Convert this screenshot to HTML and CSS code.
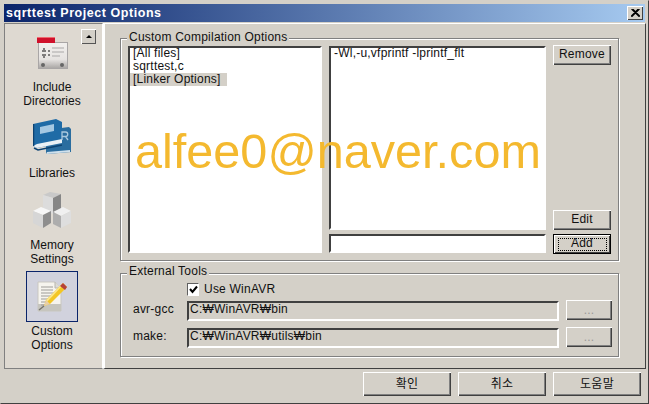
FILE: index.html
```html
<!DOCTYPE html>
<html lang="en">
<head>
  <meta charset="UTF-8" />
  <title>sqrttest Project Options</title>
  <link rel="stylesheet" href="styles.css">
</head>
<body>
  <div class="dialog">
    <!-- Title bar -->
    <div class="titlebar">
      <span class="title">sqrttest Project Options</span>
      <span class="close-btn">
        <svg width="9" height="8" viewBox="0 0 9 8"><path d="M0.5 0L8.5 8M1.8 0L9 7.2M8.5 0L0.5 8M7.2 0L0 7.2" stroke="#000" stroke-width="1.1" fill="none"/></svg>
      </span>
    </div>

    <div class="body">
      <!-- Left icon list -->
      <div class="sidebar">
        <span class="scroll-btn"><span class="arrow"></span></span>

        <div class="nav-item nav-include">
          <div class="nav-icon">
            <svg width="31" height="32" viewBox="0 0 31 32">
              <defs>
                <linearGradient id="cardFill" x1="0" y1="0" x2="0" y2="1">
                  <stop offset="0" stop-color="#f2f0ee"/>
                  <stop offset="0.65" stop-color="#e6e3e1"/>
                  <stop offset="1" stop-color="#a8a5a3"/>
                </linearGradient>
              </defs>
              <rect x="1.5" y="5.5" width="29" height="26" fill="url(#cardFill)" stroke="#a9a6a6"/>
              <rect x="0" y="0" width="18" height="6" fill="#d0112b"/>
              <rect x="0" y="0" width="18" height="1" fill="#ee6a70"/>
              <path d="M5 14h4M5 18h4M7 11v2M7 19v2M11 14h2M11 18h2" stroke="#7e7c7c" stroke-width="2" fill="none"/>
              <path d="M15 11h12M15 15h12M15 19h8" stroke="#aaa8a8" stroke-width="1.2"/>
              <circle cx="6" cy="28" r="2" fill="#666"/>
              <circle cx="25" cy="28" r="2" fill="#666"/>
            </svg>
          </div>
          <div class="nav-label">Include<br>Directories</div>
        </div>

        <div class="nav-item nav-libraries">
          <div class="nav-icon">
            <svg width="38" height="36" viewBox="0 0 38 36">
              <path d="M13 11L36 8L38 10V33L14 35L13 33Z" fill="#2a6d9f"/>
              <path d="M14 33L37 31V33L14 35Z" fill="#cfe0ec"/>
              <path d="M0 5L23 0L29 3V24L4 29L0 27Z" fill="#1f6ba6"/>
              <path d="M7 8L21 5V12L7 15Z" fill="#a5c8e2"/>
              <path d="M0 27L4 25L29 20V24L4 29Z" fill="#eaf1f6"/>
              <path d="M0.5 5V27" stroke="#0c4272" stroke-width="1.5"/>
              <path d="M1 29L5 31L29 26" stroke="#0c4272" stroke-width="1.5" fill="none"/>
              <path d="M29 21V13h3.5a2 2 0 0 1 0 4.5h-3.5M32.5 17.5l2.5 3.5" stroke="#a9c9df" stroke-width="1.3" fill="none"/>
            </svg>
          </div>
          <div class="nav-label">Libraries</div>
        </div>

        <div class="nav-item nav-memory">
          <div class="nav-icon">
            <svg width="38" height="36" viewBox="0 0 38 36">
              <path d="M10 3L17 0L28 2L20 6Z" fill="#c9c9c9"/>
              <path d="M10 3L20 6V22L10 18Z" fill="#dcdcdc"/>
              <path d="M20 6L28 2V17L20 22Z" fill="#868686"/>
              <path d="M0 19L8 15L18 19L10 23Z" fill="#f7f7f7"/>
              <path d="M0 19L10 23V36L0 31Z" fill="#d6d6d6"/>
              <path d="M10 23L18 19V31L10 36Z" fill="#8e8e8e"/>
              <path d="M20 20L30 15L38 19L28 24Z" fill="#f0f0f0"/>
              <path d="M20 20L28 24V36L20 32Z" fill="#adadad"/>
              <path d="M28 24L38 19V31L28 36Z" fill="#dedede"/>
            </svg>
          </div>
          <div class="nav-label">Memory<br>Settings</div>
        </div>

        <div class="nav-item nav-custom">
          <div class="nav-tile">
            <svg width="32" height="32" viewBox="0 0 32 32">
              <path d="M2 1H19L25 7V30H2Z" fill="#f6f4ee" stroke="#c9c7c0"/>
              <path d="M19 1V7H25" fill="#dddbd5" stroke="#b8b6b0"/>
              <rect x="2" y="23" width="23" height="7" fill="#c6c5be"/>
              <path d="M5 6H17M5 9H17M5 12H21M5 15H18M5 18H14M5 21H11M5 24H9" stroke="#9d9b98" stroke-width="1.2"/>
              <path d="M27 2L31 6L14 23L8 25L10 19Z" fill="#f3c624"/>
              <path d="M10 19L27 2L28 3L11 21Z" fill="#fbe58a"/>
              <path d="M27 2L31 6L29 9L24 5Z" fill="#b5413a"/>
              <path d="M8 25L10 19L14 23Z" fill="#e8cfa8"/>
              <path d="M8 25L3 29" stroke="#77746c" stroke-width="1.5"/>
            </svg>
          </div>
          <div class="nav-label">Custom<br>Options</div>
        </div>
      </div>

      <!-- Option groups -->
      <div class="panel">
        <div class="group group-compile">
          <span class="legend">Custom Compilation Options</span>
          <div class="compile-grid">
            <div class="sunken listbox file-list">
              <div class="row">[All files]</div>
              <div class="row">sqrttest,c</div>
              <div class="row selected">[Linker Options]</div>
            </div>
            <div class="sunken listbox options-list">
              <div class="row">-Wl,-u,vfprintf -lprintf_flt</div>
            </div>
            <div class="side-btns">
              <span class="btn">Remove</span>
              <span class="btn">Edit</span>
            </div>
            <div class="sunken option-input"></div>
            <span class="btn btn-default"><span class="focus">Add</span></span>
          </div>
        </div>

        <div class="group group-tools">
          <span class="legend">External Tools</span>
          <div class="check-row">
            <span class="checkbox">
              <svg width="9" height="9" viewBox="0 0 9 9"><path d="M1 4L3.5 7L8 1.5" stroke="#000" stroke-width="2" fill="none"/></svg>
            </span>
            <span>Use WinAVR</span>
          </div>
          <div class="tool-row">
            <span class="tool-label">avr-gcc</span>
            <span class="sunken path-field">C:₩WinAVR₩bin</span>
            <span class="btn browse-btn">...</span>
          </div>
          <div class="tool-row">
            <span class="tool-label">make:</span>
            <span class="sunken path-field">C:₩WinAVR₩utils₩bin</span>
            <span class="btn browse-btn">...</span>
          </div>
        </div>
      </div>
    </div>

    <!-- Dialog buttons -->
    <div class="footer">
      <span class="btn footer-btn">확인</span>
      <span class="btn footer-btn">취소</span>
      <span class="btn footer-btn">도움말</span>
    </div>

    <div class="watermark">alfee0@naver.com</div>
  </div>
</body>
</html>
```

FILE: styles.css
```css
/* Basic Reset */
* { margin: 0; padding: 0; box-sizing: border-box; }

body {
  font-family: "Liberation Sans", "Noto Sans CJK KR", sans-serif;
  font-size: 12px;
  letter-spacing: 0.22px;
  color: #111;
  background: #d4d0c8;
}

/* Window frame */
.dialog {
  position: relative;
  width: 649px;
  height: 404px;
  display: flex;
  flex-direction: column;
  padding: 3px;
  background: #d4d0c8;
  border: 1px solid #404040;
  border-top-color: #d4d0c8;
  border-left-color: #d4d0c8;
  overflow: hidden;
}

.titlebar {
  height: 18px;
  flex: none;
  display: flex;
  align-items: center;
  justify-content: space-between;
  padding: 0 2px;
  background: linear-gradient(90deg, #0a246a, #a6caf0);
}

.title {
  color: #fff;
  font-weight: bold;
  font-size: 12.5px;
  letter-spacing: 0.55px;
}

.close-btn {
  width: 16px;
  height: 14px;
  display: flex;
  align-items: center;
  justify-content: center;
  background: #d4d0c8;
  box-shadow: inset 1px 1px 0 #fff, inset -1px -1px 0 #404040;
}

/* Main area */
.body {
  flex: none;
  height: 346px;
  margin-top: 1px;
  display: flex;
}

.sidebar {
  position: relative;
  width: 99px;
  flex: none;
  padding-right: 3px;
  background: #ded9d1;
  border: 1px solid;
  border-color: #808080 #fff #808080 #808080;
  display: flex;
  flex-direction: column;
  align-items: center;
}

.scroll-btn {
  position: absolute;
  top: 5px;
  right: 6px;
  width: 15px;
  height: 15px;
  display: flex;
  align-items: center;
  justify-content: center;
  background: #d4d0c8;
  box-shadow: inset 1px 1px 0 #fff, inset -1px -1px 0 #555;
}

.arrow {
  border-left: 3px solid transparent;
  border-right: 3px solid transparent;
  border-bottom: 3px solid #000;
}

.nav-item {
  width: 100%;
  display: flex;
  flex-direction: column;
  align-items: center;
  text-align: center;
}

.nav-label { line-height: 14px; letter-spacing: 0; }

.nav-icon { display: flex; justify-content: center; }
.nav-include { padding-top: 13px; }
.nav-include .nav-label { margin-top: 11px; }
.nav-libraries { padding-top: 11px; }
.nav-libraries .nav-label { margin-top: 11px; }
.nav-memory { padding-top: 12px; }
.nav-memory .nav-label { margin-top: 10px; }
.nav-custom { padding-top: 5px; }

.nav-tile {
  width: 52px;
  height: 51px;
  display: flex;
  align-items: center;
  justify-content: center;
  background: #d1d2dd;
  border: 1px solid #0a246a;
  margin-bottom: 2px;
}

.panel {
  flex: 1;
  border: 1px solid;
  border-color: #fff #404040 #404040 #fff;
  border-left: 2px solid #fff;
  padding: 14px 26px 0 15px;
}

/* Etched group boxes */
.group {
  position: relative;
  border: 1px solid #808080;
  box-shadow: inset 1px 1px 0 #fff, 1px 1px 0 #fff;
}

.legend {
  position: absolute;
  top: -9px;
  left: 6px;
  padding: 0 2px;
  background: #d4d0c8;
  line-height: 14px;
}

.group-compile {
  height: 223px;
  padding: 6px 0 0 7px;
}

.compile-grid {
  display: grid;
  grid-template-columns: 194px 217px 58px;
  grid-template-rows: 185px 20px;
  column-gap: 7px;
  row-gap: 4px;
}

.compile-grid > * { min-width: 0; }

.file-list { grid-row: 1 / span 2; margin: 1px 0; }
.options-list { margin-top: 1px; }

.side-btns {
  display: flex;
  flex-direction: column;
  justify-content: space-between;
}

.option-input { grid-column: 2; margin-bottom: 1px; }

/* Sunken controls */
.sunken {
  background: #fff;
  border: 2px solid;
  border-color: #404040 #fff #fff #404040;
}

.listbox { line-height: 13px; }

.row { padding: 0 3px; height: 13px; white-space: nowrap; }
.row:first-child { margin-top: -1px; }
.row.selected { width: 97px; background: #d4d0c8; }

.btn {
  display: flex;
  align-items: center;
  justify-content: center;
  height: 20px;
  padding-bottom: 3px;
  background: #d4d0c8;
  box-shadow: inset 1px 1px 0 #fff, inset -1px -1px 0 #404040, inset -2px -2px 0 #808080;
}

.btn-default {
  padding-bottom: 0;
  box-shadow: inset 0 0 0 1px #000, inset 2px 2px 0 #fff, inset -2px -2px 0 #404040;
}

.focus {
  width: 49px;
  height: 13px;
  line-height: 8px;
  text-align: center;
  border: 1px dotted #000;
}

.group-tools {
  height: 84px;
  margin-top: 12px;
  padding: 7px 6px 0 0;
}

.group-tools .legend { top: -10px; }

.check-row {
  display: flex;
  align-items: center;
  gap: 5px;
  height: 16px;
  margin-left: 66px;
}

.checkbox {
  width: 12px;
  height: 13px;
  display: flex;
  align-items: center;
  justify-content: center;
  background: #fff;
  border: 1px solid;
  border-color: #606060 #fff #fff #606060;
}

.tool-row {
  display: flex;
  align-items: flex-start;
  margin-top: 7px;
  height: 20px;
}

.check-row + .tool-row { margin-top: 4px; }

.tool-label {
  width: 66px;
  padding-left: 12px;
  line-height: 16px;
  flex: none;
}

.path-field {
  width: 372px;
  height: 20px;
  padding-left: 1px;
  line-height: 13px;
  background: #d4d0c8;
  flex: none;
}

.browse-btn {
  width: 46px;
  margin: -1px 0 0 7px;
  color: #999;
  padding-bottom: 0;
}

/* Dialog buttons */
.footer {
  flex: 1;
  display: flex;
  justify-content: flex-end;
  gap: 7px;
  padding: 3px 4px 0 0;
}

.footer-btn {
  width: 88px;
  height: 24px;
  font-family: "Noto Sans CJK KR", sans-serif;
}

/* Big orange address painted over the window */
.watermark {
  position: absolute;
  left: 134px;
  top: 122px;
  font-size: 48.6px;
  letter-spacing: 0;
  line-height: 56px;
  color: #f4b92f;
  white-space: nowrap;
}
```
